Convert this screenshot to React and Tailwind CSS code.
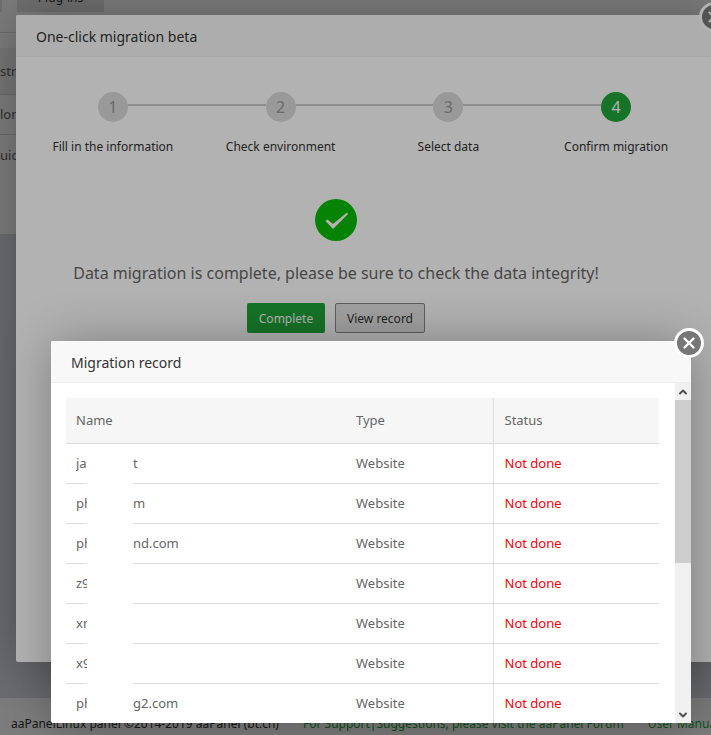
import { ChevronDown, ChevronUp, X } from 'lucide-react';

const STEPS = ['Fill in the information', 'Check environment', 'Select data', 'Confirm migration'];

const RECORDS = [
  { start: 'jav', end: 't' },
  { start: 'phh', end: 'm' },
  { start: 'phh', end: 'nd.com' },
  { start: 'z9', end: '' },
  { start: 'xn', end: '' },
  { start: 'x9', end: '' },
  { start: 'phh', end: 'g2.com' },
];

export default function App() {
  return (
    <div className="relative h-screen overflow-hidden font-['Noto_Sans',sans-serif] text-[13px] text-[#666]">
      <PluginPage />
      <div className="absolute inset-0 bg-black/30" />
      <MigrationDialog />
      <div className="absolute inset-0 bg-black/30" />
      <RecordDialog />
    </div>
  );
}

function PluginPage() {
  return (
    <div className="flex h-full flex-col bg-[#dcdfe4]">
      <main className="h-[234px] bg-white">
        <nav className="flex h-3 items-end gap-[15px] overflow-hidden text-xs leading-4 text-[#333]">
          <span className="h-5 w-0.5 bg-[#e5e5e5]" />
          <a href="#plugins" className="w-[87px] bg-[#e5e5e5] pb-1.5 text-center">Plug-ins</a>
        </nav>
        <div className="mt-5 border-t border-[#ddd]" />
        <ul className="mt-[15px]">
          <li className="flex h-[47px] items-center border-b border-[#ddd] bg-[#f2f2f2] pt-0.5">str</li>
          <li className="flex h-10 items-center border-b border-[#ddd]">lon</li>
          <li className="flex h-10 items-center pt-0.5">uic</li>
        </ul>
      </main>
      <footer className="mt-auto flex h-[37px] items-center gap-6 overflow-hidden bg-white px-[11px] pt-3.5 text-xs leading-5 whitespace-nowrap text-[#333]">
        <span>aaPanelLinux panel ©2014-2019 aaPanel (bt.cn)</span>
        <a href="#forum" className="text-[#20a53a]">For Support|Suggestions, please visit the aaPanel Forum</a>
        <a href="#manual" className="text-[#20a53a]">User Manual</a>
      </footer>
    </div>
  );
}

function CloseButton() {
  return (
    <button
      type="button"
      aria-label="Close"
      className="absolute -top-[13px] -right-[13px] flex h-[30px] w-[30px] items-center justify-center rounded-full border-3 border-white bg-[#777] text-white"
    >
      <X size={18} strokeWidth={3} className="shrink-0" />
    </button>
  );
}

function DialogTitle({ children }) {
  return (
    <h2 className="flex h-[42px] shrink-0 items-center rounded-t-xs border-b border-[#eee] bg-[#f8f8f8] px-5 pt-0.5 text-sm text-[#333]">
      {children}
    </h2>
  );
}

function MigrationDialog() {
  return (
    <section className="absolute top-[15px] -right-[5px] bottom-[73px] left-4 rounded-xs bg-white shadow-[1px_1px_50px_rgba(0,0,0,0.3)]">
      <DialogTitle>One-click migration beta</DialogTitle>
      <CloseButton />
      <ol className="mt-[35px] mr-4 ml-[13px] grid grid-cols-4">
        {STEPS.map((step, index) => (
          <Step key={step} number={index + 1} label={step} active={index === STEPS.length - 1} />
        ))}
      </ol>
      <div className="mr-[60px] flex flex-col items-center pt-[42px]">
        <svg viewBox="0 0 42 42" className="h-[42px] w-[42px]">
          <circle cx="21" cy="21" r="21" fill="#09bb07" />
          <path d="M10.500 22l2-1.500 5.500 4.500L32 13.500l1 1.500L18 30z" fill="#fff" />
        </svg>
        <p className="mt-5 text-base leading-6">Data migration is complete, please be sure to check the data integrity!</p>
        <div className="mt-[18px] flex gap-2.5 text-xs">
          <button type="button" className="h-[30px] w-[78px] rounded-xs bg-[#20a53a] pt-0.5 text-white">Complete</button>
          <button type="button" className="h-[30px] w-[90px] rounded-xs border border-[#888] bg-[#e6e6e6] pt-0.5 text-[#333]">View record</button>
        </div>
      </div>
    </section>
  );
}

function Step({ number, label, active }) {
  return (
    <li className="relative flex flex-col items-center">
      {!active && <span className="absolute top-3 left-[calc(50%+15px)] h-0.5 w-[calc(100%-30px)] bg-[#ccc]" />}
      <span
        className={`flex h-[30px] w-[30px] items-center justify-center rounded-full text-base ${
          active ? 'bg-[#20a53a] text-white' : 'bg-[#dcdcdc] text-[#999]'
        }`}
      >
        {number}
      </span>
      <span className="mt-[15px] text-xs leading-5 whitespace-nowrap text-[#333]">{label}</span>
    </li>
  );
}

function RecordDialog() {
  return (
    <section className="absolute top-[341px] right-5 bottom-3 left-[51px] flex flex-col rounded-xs bg-white shadow-[1px_1px_50px_rgba(0,0,0,0.3)]">
      <DialogTitle>Migration record</DialogTitle>
      <CloseButton />
      <div className="flex min-h-0 flex-1">
        <div className="flex-1 overflow-hidden pt-[15px] pr-4 pl-[15px]">
          <table className="w-full table-fixed border-collapse text-left">
            <thead>
              <tr className="h-[45px] border-b border-[#ddd] bg-[#f6f6f6]">
                <th className="px-2.5 font-normal">Name</th>
                <th className="w-[148px] px-[11px] font-normal">Type</th>
                <th className="w-[166px] border-l border-[#ddd] px-[11px] font-normal">Status</th>
              </tr>
            </thead>
            <tbody>
              {RECORDS.map((record, index) => (
                <RecordRow key={index} record={record} />
              ))}
            </tbody>
          </table>
        </div>
        <div className="flex w-4 flex-col items-center justify-between bg-[#f0f0f0] text-[#505050]">
          <ChevronUp size={12} strokeWidth={4} className="mt-[3px] mb-0.5" />
          <div className="mb-auto h-[163px] w-full bg-[#cdcdcd]" />
          <ChevronDown size={12} strokeWidth={4} className="my-0.5" />
        </div>
      </div>
    </section>
  );
}

function RecordRow({ record }) {
  return (
    <tr className="h-10 border-b border-[#ddd]">
      <td className="px-2.5">
        <div className="flex h-[39px] items-center">
          <span className="w-[11px] overflow-hidden pt-0.5">{record.start}</span>
          {/* hidden middle part of the site name */}
          <span className="-mb-0.5 h-full w-[46px] shrink-0 bg-white" />
          <span className="pt-0.5">{record.end}</span>
        </div>
      </td>
      <td className="px-[11px] pt-0.5">Website</td>
      <td className="border-l border-[#ddd] px-[11px] pt-0.5 text-[#f00]">Not done</td>
    </tr>
  );
}
